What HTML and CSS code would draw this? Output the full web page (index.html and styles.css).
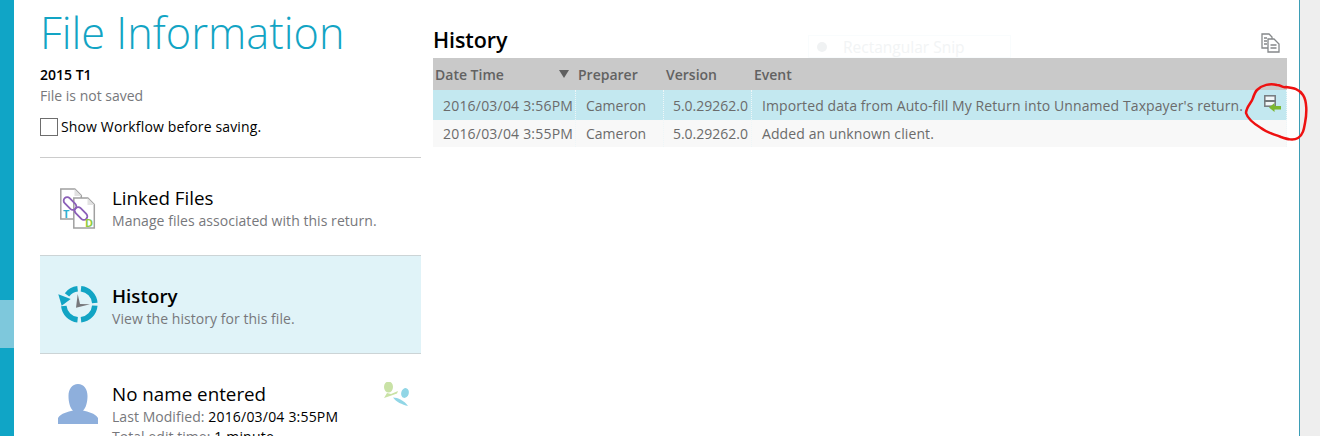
FILE: index.html
```html
<!DOCTYPE html>
<html lang="en">
<head>
  <meta charset="UTF-8" />
  <title>File Information</title>
  <link rel="stylesheet" href="styles.css">
</head>
<body>
  <div class="strip"><div class="strip-active"></div></div>

  <aside class="info">
    <h1>File Information</h1>
    <div class="file-name">2015 T1</div>
    <div class="file-state">File is not saved</div>
    <label class="workflow"><span class="box"></span>Show Workflow before saving.</label>

    <div class="nav-item linked">
      <svg class="nav-icon" width="36" height="41" viewBox="0 0 36 41">
        <path d="M.8 1h14l6.500 6.500V31H.8z" fill="#fff" stroke="#a0a0a0" stroke-width="1.500"/>
        <path d="M14.500 1v7h7z" fill="#e2e2e2"/>
        <path d="M13.800 10h14l6.500 6.500V40H13.800z" fill="#fff" stroke="#a0a0a0" stroke-width="1.500"/>
        <path d="M27.500 10v7h7z" fill="#e2e2e2"/>
        <g fill="none" stroke="#8b5fb8" stroke-width="1.800">
          <rect x="2.500" y="12" width="15" height="7" rx="3.500" transform="rotate(45 10 15.500)"/>
          <rect x="13.500" y="22" width="15" height="7" rx="3.500" transform="rotate(45 21 25.500)"/>
        </g>
        <text x="3" y="30" class="mark-t">T</text>
        <text x="25" y="38.500" class="mark-d">D</text>
      </svg>
      <div class="nav-text">
        <div class="nav-title">Linked Files</div>
        <div class="nav-desc">Manage files associated with this return.</div>
      </div>
    </div>

    <div class="nav-item active">
      <svg class="nav-icon" width="40" height="40" viewBox="0 0 40 40">
        <g fill="none" stroke="#12a4c4" stroke-width="5.500">
          <path d="M9 9.800A15.500 15.500 0 0 1 19.600 3.800"/>
          <path d="M23 3.800A15.500 15.500 0 0 1 36.800 18"/>
          <path d="M36.800 20.600A15.500 15.500 0 0 1 23 34.800"/>
          <path d="M19.600 34.800A15.500 15.500 0 0 1 5.800 21"/>
        </g>
        <path d="M.3 9.300L12.700 14 3.700 20.700z" fill="#12a4c4"/>
        <path d="M19.700 9l2.300 10 10 .3-14 3.400z" fill="#77787c"/>
      </svg>
      <div class="nav-text">
        <div class="nav-title strong">History</div>
        <div class="nav-desc">View the history for this file.</div>
      </div>
    </div>

    <div class="nav-item person">
      <svg class="nav-icon" width="40" height="40" viewBox="0 0 40 40">
        <path d="M0 40v-6c3-5 10-6 15-7.500C12 24 10.500 18 10.500 12 10.500 5 14 0 20 0s9.500 5 9.500 12c0 6-1.500 12-4.500 14.500 5 1.500 12 2.500 15 7.500v6z" fill="#8eafdc"/>
      </svg>
      <div class="person-text">
        <div class="nav-title">No name entered</div>
        <div class="nav-desc">Last Modified: <span class="dark">2016/03/04 3:55PM</span></div>
        <div class="nav-desc">Total edit time: <span class="dark">1 minute</span></div>
      </div>
      <svg class="people" width="26" height="24" viewBox="0 0 26 24">
        <ellipse cx="4.500" cy="5" rx="4.500" ry="5.500" fill="#c9e2a6"/>
        <path d="M0 16l3-5 4 1 7-3-1 2.500L6 14z" fill="#c9e2a6"/>
        <ellipse cx="21" cy="11" rx="3.800" ry="5" transform="rotate(15 21 11)" fill="#91d6e6"/>
        <path d="M9 15.500c5 0 11 3 15 8.500-6-1.500-12-4-15-8.500z" fill="#91d6e6"/>
      </svg>
    </div>
  </aside>

  <main class="history">
    <div class="history-head">
      <h2>History</h2>
      <svg width="20" height="20" viewBox="0 0 20 20" fill="#fff" stroke="#85888a" stroke-width="1.300">
        <path d="M1 1h7l3 3v11H1z"/>
        <path d="M7 6h6l5 5v8H7z"/>
        <path d="M3 5h3M3 8h3M3 11h3M9.500 12h6M9.500 15h6" fill="none"/>
      </svg>
    </div>

    <div class="grid-row grid-header">
      <div class="date-head">Date Time <span class="sort"></span></div>
      <div>Preparer</div>
      <div>Version</div>
      <div>Event</div>
    </div>
    <div class="grid-row selected">
      <div class="date">2016/03/04 3:56PM</div>
      <div>Cameron</div>
      <div class="ver">5.0.29262.0</div>
      <div class="event"><span class="event-text">Imported data from Auto-fill My Return into Unnamed Taxpayer's return.</span>
        <svg class="restore" width="18" height="18" viewBox="0 0 18 18">
          <rect x=".8" y=".8" width="10.400" height="10.400" fill="#f2f7f8" stroke="#74797c" stroke-width="1.500"/>
          <rect x="0" y="5" width="12" height="2" fill="#74797c"/>
          <path d="M5 12.500L10.500 8v3H17v3.500h-6.500V17z" fill="#7cb82f"/>
        </svg>
      </div>
    </div>
    <div class="grid-row plain">
      <div class="date">2016/03/04 3:55PM</div>
      <div>Cameron</div>
      <div class="ver">5.0.29262.0</div>
      <div class="event"><span class="event-text">Added an unknown client.</span></div>
    </div>

    <div class="snip"><span class="snip-dot"></span><span class="snip-label">Rectangular Snip</span></div>
  </main>

  <div class="gutter"></div>

  <svg class="scribble" width="70" height="64" viewBox="0 0 70 64">
    <path d="M13 8C18 3 26 1 33 3c4 0 5 3 9 2 8 1 13 2 17 8 4 6 4 18 2 28-1 6-2 12-7 15-5 3-11 1-17-1-7-3-14-4-20-9C12 43 4 38 2 31 2 25 8 20 9 16c1-3 2-6 4-8z" fill="none" stroke="#ee1111" stroke-width="2.500"/>
  </svg>
</body>
</html>
```

FILE: styles.css
```css
* {
  box-sizing: border-box;
}

body {
  margin: 0;
  height: 436px;
  overflow: hidden;
  display: flex;
  background: #fff;
  color: #000;
  font-family: 'Open Sans', 'Noto Sans', sans-serif;
  font-size: 14px;
  position: relative;
}

.strip {
  width: 14px;
  flex: none;
  background: #10a5c6;
  padding-top: 300px;
}

.strip-active {
  height: 48px;
  background: #7ec8dc;
}

.info {
  width: 381px;
  flex: none;
  margin-left: 26px;
}

h1 {
  margin: 8px 0 0;
  font-size: 43.300px;
  line-height: 50px;
  font-weight: 300;
  color: #12a4c4;
}

.file-name {
  margin-top: 7px;
  font-weight: 600;
  line-height: 20px;
}

.file-state {
  color: #77787c;
  line-height: 20px;
  margin-top: 1px;
}

.workflow {
  display: flex;
  align-items: center;
  gap: 3px;
  margin-top: 12px;
  padding-bottom: 21px;
  border-bottom: 1px solid #ccc;
  line-height: 18px;
  letter-spacing: .14px;
}

.box {
  width: 18px;
  height: 18px;
  border: 1px solid #6d6d6d;
}

.nav-item {
  height: 97px;
  display: flex;
  align-items: center;
  padding-left: 20px;
}

.nav-item.active {
  height: 99px;
  background: #e0f3f8;
  border-top: 1px solid #ccd4d6;
  border-bottom: 1px solid #ccd4d6;
  padding-left: 18px;
}

.nav-icon {
  flex: none;
  margin-right: 16px;
}

.linked .nav-icon {
  margin-top: 3px;
}

.active .nav-icon {
  margin-right: 14px;
}

.nav-text {
  margin-top: 4px;
}

.nav-title {
  font-size: 18.800px;
  line-height: 25px;
}

.nav-title.strong {
  font-weight: 600;
}

.nav-desc {
  color: #77787c;
  line-height: 20px;
  letter-spacing: .05px;
}

.dark {
  color: #000;
  letter-spacing: .2px;
}

.person {
  align-items: flex-start;
  padding-top: 28px;
  padding-left: 18px;
  position: relative;
}

.person .nav-icon {
  margin-top: 2px;
  margin-right: 14px;
}

.people {
  position: absolute;
  left: 344px;
  top: 28px;
}

.mark-t {
  font-size: 11px;
  font-weight: 700;
  fill: #2fb0d0;
}

.mark-d {
  font-size: 11px;
  font-weight: 700;
  fill: #8fcb3c;
}

.history {
  width: 854px;
  flex: none;
  margin-left: 12px;
  position: relative;
}

.history-head {
  height: 58px;
  display: flex;
  justify-content: space-between;
  align-items: flex-end;
  padding: 0 6px 3px 0;
}

h2 {
  margin: 0;
  font-size: 21.500px;
  line-height: 30px;
  font-weight: 600;
  letter-spacing: -.1px;
}

.history-head svg {
  margin-bottom: 2px;
}

.grid-row {
  display: grid;
  grid-template-columns: 143px 88px 88px 535px;
  align-items: stretch;
  color: #6b6b6b;
}

.grid-row > div {
  display: flex;
  align-items: center;
  padding-left: 10px;
  border-right: 1px dotted #eef6f8;
}

.grid-header {
  height: 32px;
  background: #c9c9c9;
  color: #626262;
  font-weight: 600;
}

.grid-header > div {
  padding-left: 2px;
  border: 0;
}

.date-head {
  justify-content: space-between;
  padding-right: 7px;
}

.sort {
  width: 0;
  height: 0;
  border-left: 5.500px solid transparent;
  border-right: 5.500px solid transparent;
  border-top: 8px solid #5f5f5f;
}

.selected {
  height: 30px;
  background: #c3e8f0;
}

.plain {
  height: 27px;
  background: #f8f8f8;
}

.date {
  letter-spacing: .2px;
  white-space: nowrap;
}

.grid-row .ver {
  justify-content: flex-end;
  padding-right: 3px;
}

.event {
  white-space: nowrap;
  justify-content: space-between;
}

.event-text {
  letter-spacing: .1px;
}

.restore {
  margin: -2px 4px 0 0;
}

.snip {
  position: absolute;
  left: 375px;
  top: 35px;
  width: 203px;
  height: 23px;
  display: flex;
  align-items: center;
  border: 1px solid #f9fcfd;
  color: #f2f4f5;
  font-size: 15.500px;
}

.snip-dot {
  width: 10px;
  height: 10px;
  margin: 0 16px 0 8px;
  border-radius: 50%;
  background: #f0f2f3;
}

.gutter {
  position: absolute;
  left: 1299px;
  top: 0;
  right: 0;
  bottom: 0;
  background: #eee;
  border-left: 1px solid #3d9db5;
}

.scribble {
  position: absolute;
  left: 1244px;
  top: 82px;
}
```
